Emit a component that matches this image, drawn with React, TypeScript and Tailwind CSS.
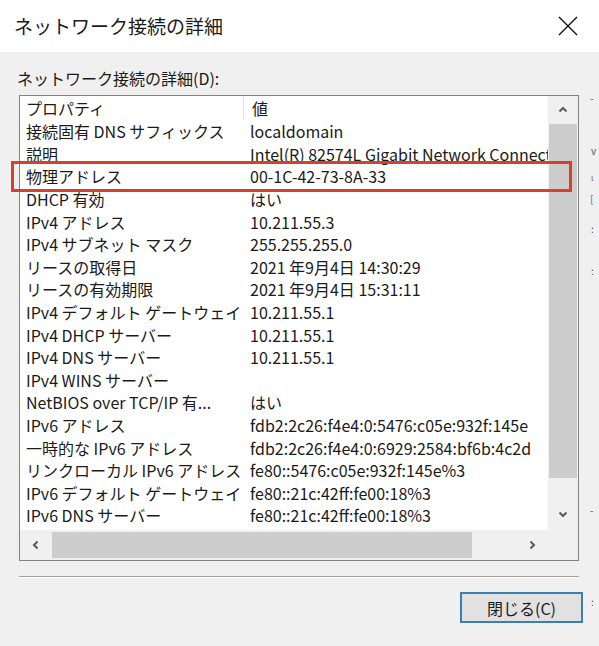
const rows: [string, string][] = [
  ["接続固有 DNS サフィックス", "localdomain"],
  ["説明", "Intel(R) 82574L Gigabit Network Connection"],
  ["物理アドレス", "00-1C-42-73-8A-33"],
  ["DHCP 有効", "はい"],
  ["IPv4 アドレス", "10.211.55.3"],
  ["IPv4 サブネット マスク", "255.255.255.0"],
  ["リースの取得日", "2021 年9月4日 14:30:29"],
  ["リースの有効期限", "2021 年9月4日 15:31:11"],
  ["IPv4 デフォルト ゲートウェイ", "10.211.55.1"],
  ["IPv4 DHCP サーバー", "10.211.55.1"],
  ["IPv4 DNS サーバー", "10.211.55.1"],
  ["IPv4 WINS サーバー", ""],
  ["NetBIOS over TCP/IP 有...", "はい"],
  ["IPv6 アドレス", "fdb2:2c26:f4e4:0:5476:c05e:932f:145e"],
  ["一時的な IPv6 アドレス", "fdb2:2c26:f4e4:0:6929:2584:bf6b:4c2d"],
  ["リンクローカル IPv6 アドレス", "fe80::5476:c05e:932f:145e%3"],
  ["IPv6 デフォルト ゲートウェイ", "fe80::21c:42ff:fe00:18%3"],
  ["IPv6 DNS サーバー", "fe80::21c:42ff:fe00:18%3"],
];

function Chevron({ dir }: { dir: "up" | "down" | "left" | "right" }) {
  const d = {
    up: "M2.5 7.5 L6 4 L9.5 7.5",
    down: "M2.5 4.5 L6 8 L9.5 4.5",
    left: "M7.5 2.5 L4 6 L7.5 9.5",
    right: "M4.5 2.5 L8 6 L4.5 9.5",
  }[dir];
  return (
    <svg width="12" height="12" viewBox="0 0 12 12" fill="none">
      <path d={d} stroke="#5a5a5a" strokeWidth="2" />
    </svg>
  );
}

export default function App() {
  return (
    <div
      className="w-[599px] h-[646px] bg-[#f0f0f0] text-[#1a1a1a] overflow-hidden"
      style={{ fontFamily: '"Noto Sans CJK JP", "Noto Sans", sans-serif' }}
    >
      {/* タイトルバー */}
      <div className="h-[52px] bg-white flex items-center justify-between pl-[14px] pr-[21px]">
        <span className="text-[19px] leading-[24px]">ネットワーク接続の詳細</span>
        <svg width="20" height="20" viewBox="0 0 20 20">
          <path d="M1 1 L19 19 M19 1 L1 19" stroke="#111" strokeWidth="1.4" />
        </svg>
      </div>

      <div className="flex">
        <div className="w-[583px]">
          <div className="pl-[17px] pt-[15px] h-[43px] text-[16px] leading-[22px]">
            ネットワーク接続の詳細(D):
          </div>

          {/* リスト */}
          <div className="relative ml-[19px] w-[560px] h-[466px] border border-[#828282] bg-white">
            <div className="flex h-[434px]">
              <div className="w-[528px] overflow-hidden text-[16px]">
                <div className="flex h-[24px] items-center leading-[22px]">
                  <div className="w-[223px] pl-[6px] shrink-0">プロパティ</div>
                  <div className="w-px h-full bg-[#e5e5e5]" />
                  <div className="pl-[8px] whitespace-nowrap">値</div>
                </div>
                {rows.map(([k, v]) => (
                  <div key={k} className="flex h-[22.6px] items-center leading-[22px]">
                    <div className="w-[223px] pl-[6px] shrink-0 whitespace-nowrap">{k}</div>
                    <div className="pl-[7px] whitespace-nowrap">{v}</div>
                  </div>
                ))}
              </div>
              <div className="w-[30px] bg-[#f0f0f0] flex flex-col items-center">
                <div className="h-[28px] flex items-center justify-center">
                  <Chevron dir="up" />
                </div>
                <div className="w-[28px] h-[354px] bg-[#cdcdcd]" />
                <div className="flex-1 flex items-end justify-center pb-[10px]">
                  <Chevron dir="down" />
                </div>
              </div>
            </div>
            <div className="flex h-[30px] bg-[#f0f0f0] items-center">
              <div className="w-[32px] flex justify-center">
                <Chevron dir="left" />
              </div>
              <div className="w-[420px] h-[26px] bg-[#cdcdcd]" />
              <div className="w-[76px] flex justify-end pr-[10px]">
                <Chevron dir="right" />
              </div>
            </div>

            {/* 強調枠 */}
            <div className="absolute left-[-9px] top-[65px] w-[561px] h-[31px] border-[3px] border-[#d9402a]" />
          </div>

          <div className="ml-[19px] mt-[15px] w-[560px] h-[2px] border-t border-[#a0a0a0] border-b border-b-white" />

          <div className="flex justify-end mt-[14px]">
            <button className="w-[123px] h-[31px] bg-[#e1e1e1] border-2 border-[#3b7fb0] text-[16px] leading-[22px]">
              閉じる(C)
            </button>
          </div>
        </div>

        {/* 背後のウィンドウ */}
        <div className="flex-1 relative text-[10px] text-[#555] leading-none">
          <div className="absolute left-[7px] top-[41px]">-</div>
          <div className="absolute left-[8px] top-[94px]">v</div>
          <div className="absolute left-[8px] top-[122px] text-[8px]">ι</div>
          <div className="absolute left-[7px] top-[142px] text-[#3b6fb0]">[</div>
          <div className="absolute left-[8px] top-[172px]">:</div>
          <div className="absolute left-[8px] top-[214px]">:</div>
          <div className="absolute left-[7px] top-[453px]">-</div>
          <div className="absolute left-[8px] top-[545px]">:</div>
        </div>
      </div>
    </div>
  );
}
